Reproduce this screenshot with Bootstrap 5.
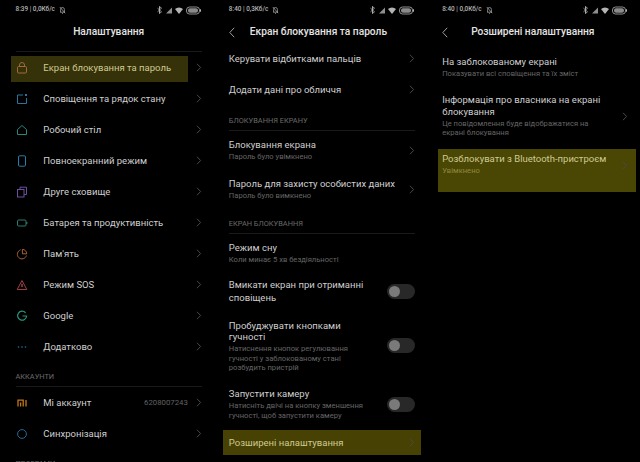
<!DOCTYPE html>
<html>

<head>
  <meta charset="utf-8">
  <meta name="viewport" content="width=device-width, initial-scale=1">
  <link href="https://cdn.jsdelivr.net/npm/bootstrap@5.3.3/dist/css/bootstrap.min.css" rel="stylesheet">
  <title>Налаштування</title>
  <style>
    html, body { height: 462px; overflow: hidden; background: #000; }
    body { font-family: Roboto, "Liberation Sans", sans-serif; color: #cfcfcf; font-size: 9.5px; line-height: 11.5px; }
    .pane { width: 213.33px; height: 462px; overflow: hidden; flex: none; padding: 0 11.5px 0 15.5px; }
    .status { height: 20px; font-size: 6.4px; color: #b4b4b4; font-weight: 500; }
    .status svg { display: block; }
    .head { height: 22px; padding-top: 2px; font-size: 10.2px; font-weight: 500; color: #e4e4e4; }
    .back { width: 21px; flex: none; }
    .set-row { height: 31px; }
    .hl { color: #cfca92; }
    .hl-a { margin: 3px 0 0 -4.8px; height: 26px; width: 177px; padding: 0 0 3px 4.8px; flex: none; background: #353108; }
    .hl-b { margin: 2px -5.5px 0 -6px; height: 25px; padding: 0 5.5px 0 6px; background: #474204; }
    .hl-c { margin: 0 -7.5px 0 -4.5px; height: 43px; padding: 4px 8px 0 4.5px; background: #4a4604; }
    .hl-c .chev { margin-top: 8px; }
    .ico { width: 27.8px; flex: none; }
    .ico svg { display: block; opacity: .88; }
    .chev { width: 6px; height: 9px; flex: none; }
    .sect { font-size: 7.4px; color: #6a6a6a; line-height: 10px; border-bottom: 1px solid #1a1a1a; }
    .sub { font-size: 7.6px; color: #666; line-height: 9.3px; margin-top: 1.5px; }
    .hl .sub { color: #8f8a3c; }
    .val { font-size: 7.8px; color: #626262; }
    .tog { width: 28px; height: 15px; border-radius: 8px; background: #282828; flex: none; padding: 2px; margin-left: 8px; }
    .tog i { display: block; width: 11px; height: 11px; border-radius: 50%; background: #7a7a7a; }
    .txt { min-width: 0; }
    .low-row { padding-top: 2px; }
  </style>
</head>

<body>
  <svg width="0" height="0" class="position-absolute">
    <symbol id="chev" viewBox="0 0 6 9"><path d="M1 .8 4.6 4.5 1 8.2" fill="none" stroke="#4a4a4a" stroke-width="1"/></symbol>
    <symbol id="stat" viewBox="0 0 46 9">
      <path d="M3.5.5v7M1.5 2.2l4 3.6-2 1.7V.5l2 1.7-4 3.6" fill="none" stroke="#b4b4b4" stroke-width=".8"/>
      <path d="M10 7.5 16 1.5v6z" fill="#8f8f8f"/>
      <path d="M19 3a6 6 0 0 1 8 0l-4 5z" fill="#b4b4b4"/>
      <rect x="30.5" y="1" width="13" height="7" rx="3" fill="none" stroke="#b4b4b4" stroke-width=".8"/>
      <rect x="32" y="2.3" width="10" height="4.4" rx="2" fill="#8a8a8a"/>
      <rect x="44" y="3.3" width="1" height="2.4" fill="#b4b4b4"/>
    </symbol>
    <symbol id="bell" viewBox="0 0 7 8"><path d="M1 6.2h5M1.6 6V3.4a1.9 1.9 0 0 1 3.8 0V6M3 7.4h1M.8 1l5.4 6.2" fill="none" stroke="#b4b4b4" stroke-width=".7"/></symbol>
    <symbol id="arrow" viewBox="0 0 6 11"><path d="M5.2 .8.8 5.5l4.4 4.7" fill="none" stroke="#b0b0b0" stroke-width=".9"/></symbol>
  </svg>

  <div class="d-flex">
    <!-- Налаштування -->
    <div class="pane">
      <div class="status d-flex align-items-center justify-content-between">
        <div class="d-flex align-items-center gap-1">8:39 | 0,0Кб/с <svg width="7" height="8"><use href="#bell"/></svg></div>
        <svg width="46" height="9"><use href="#stat"/></svg>
      </div>
      <div class="head d-flex align-items-center justify-content-center">Налаштування</div>
      <div class="sect" style="height:10px"></div>
      <div class="d-flex align-items-center" style="height:31px">
        <div class="hl hl-a d-flex align-items-center">
          <div class="ico"><svg width="12" height="12" viewBox="0 0 12 12"><rect x="1.5" y="4.5" width="9" height="6.5" rx="1" fill="none" stroke="#b2704a"/><path d="M3.5 4.5V3a2.5 2.5 0 0 1 5 0v1.5" fill="none" stroke="#b2704a"/></svg></div>
          <span>Екран блокування та пароль</span>
        </div>
        <svg class="chev ms-auto"><use href="#chev"/></svg>
      </div>
      <div class="set-row d-flex align-items-center">
        <div class="ico"><svg width="12" height="12" viewBox="0 0 12 12"><path d="M7 2H1.5v8.5h9V5" fill="none" stroke="#2e84b5"/><rect x="9" y="1" width="2" height="2" fill="#2e84b5"/></svg></div>
        <span>Сповіщення та рядок стану</span><svg class="chev ms-auto"><use href="#chev"/></svg>
      </div>
      <div class="set-row d-flex align-items-center">
        <div class="ico"><svg width="12" height="12" viewBox="0 0 12 12"><path d="M1.5 5.5 6 1.5l4.5 4v5h-9z" fill="none" stroke="#2c9a93"/></svg></div>
        <span>Робочий стіл</span><svg class="chev ms-auto"><use href="#chev"/></svg>
      </div>
      <div class="set-row d-flex align-items-center">
        <div class="ico"><svg width="12" height="12" viewBox="0 0 12 12"><rect x="2.5" y=".8" width="7" height="10.4" rx="1.2" fill="none" stroke="#2b91c4"/></svg></div>
        <span>Повноекранний режим</span><svg class="chev ms-auto"><use href="#chev"/></svg>
      </div>
      <div class="set-row d-flex align-items-center">
        <div class="ico"><svg width="12" height="12" viewBox="0 0 12 12"><rect x="1.5" y="3.5" width="6.5" height="7.5" fill="none" stroke="#7a5bb5"/><path d="M4 3.5V1.2h6.5v7.3H8" fill="none" stroke="#7a5bb5"/></svg></div>
        <span>Друге сховище</span><svg class="chev ms-auto"><use href="#chev"/></svg>
      </div>
      <div class="set-row d-flex align-items-center">
        <div class="ico"><svg width="12" height="12" viewBox="0 0 12 12"><rect x="1.5" y="3" width="8.5" height="6" rx="1" fill="none" stroke="#2c9080"/><rect x="10.2" y="5" width="1.2" height="2" fill="#2c9080"/></svg></div>
        <span>Батарея та продуктивність</span><svg class="chev ms-auto"><use href="#chev"/></svg>
      </div>
      <div class="set-row d-flex align-items-center">
        <div class="ico"><svg width="12" height="12" viewBox="0 0 12 12"><path d="M4.6 1.9a4.6 4.6 0 1 0 5.8 5.6M6.4 1.4a4.3 4.3 0 0 1 4.3 4.4H6.4z" fill="none" stroke="#c2703c"/></svg></div>
        <span>Пам'ять</span><svg class="chev ms-auto"><use href="#chev"/></svg>
      </div>
      <div class="set-row d-flex align-items-center">
        <div class="ico"><svg width="12" height="12" viewBox="0 0 12 12"><path d="M6 1.5 10.8 10.5H1.2z" fill="none" stroke="#b8474f"/><path d="M6 4.8v3.2" stroke="#b8474f" stroke-width="1.5"/></svg></div>
        <span>Режим SOS</span><svg class="chev ms-auto"><use href="#chev"/></svg>
      </div>
      <div class="set-row d-flex align-items-center">
        <div class="ico"><svg width="12" height="12" viewBox="0 0 12 12"><path d="M9.6 2.8A4.5 4.5 0 1 0 10.6 6H6.5" fill="none" stroke="#2fa98c" stroke-width="1.2"/></svg></div>
        <span>Google</span><svg class="chev ms-auto"><use href="#chev"/></svg>
      </div>
      <div class="set-row d-flex align-items-center">
        <div class="ico"><svg width="12" height="12" viewBox="0 0 12 12"><g fill="#2a86b8"><circle cx="2.5" cy="6" r=".8"/><circle cx="6" cy="6" r=".8"/><circle cx="9.5" cy="6" r=".8"/></g></svg></div>
        <span>Додатково</span><svg class="chev ms-auto"><use href="#chev"/></svg>
      </div>
      <div class="sect d-flex align-items-end pb-1" style="height:25px">АККАУНТИ</div>
      <div class="set-row d-flex align-items-center">
        <div class="ico"><svg width="12" height="12" viewBox="0 0 12 12"><path d="M2 9.5V3.2h5.2v6.3M4.6 5.5v4M10 3v6.5" fill="none" stroke="#e0871f" stroke-width="1.3"/></svg></div>
        <span>Мі аккаунт</span><span class="val ms-auto">6208007243</span><svg class="chev ms-2"><use href="#chev"/></svg>
      </div>
      <div class="set-row d-flex align-items-center">
        <div class="ico"><svg width="12" height="12" viewBox="0 0 12 12"><circle cx="6" cy="6" r="4.4" fill="none" stroke="#2a78a8"/></svg></div>
        <span>Синхронізація</span><svg class="chev ms-auto"><use href="#chev"/></svg>
      </div>
      <div class="sect d-flex align-items-end border-0" style="height:20px">ПРОГРАМИ</div>
    </div>

    <!-- Екран блокування та пароль -->
    <div class="pane">
      <div class="status d-flex align-items-center justify-content-between">
        <div class="d-flex align-items-center gap-1">8:40 | 0,3Кб/с <svg width="7" height="8"><use href="#bell"/></svg></div>
        <svg width="46" height="9"><use href="#stat"/></svg>
      </div>
      <div class="head d-flex align-items-center">
        <div class="back"><svg class="d-block" width="6" height="11"><use href="#arrow"/></svg></div>
        <span>Екран блокування та пароль</span>
      </div>
      <div class="set-row d-flex align-items-center" style="margin-top:1px">
        <span>Керувати відбитками пальців</span><svg class="chev ms-auto"><use href="#chev"/></svg>
      </div>
      <div class="set-row d-flex align-items-center">
        <span>Додати дані про обличчя</span><svg class="chev ms-auto"><use href="#chev"/></svg>
      </div>
      <div class="sect d-flex align-items-end pb-1" style="height:26px">БЛОКУВАННЯ ЕКРАНУ</div>
      <div class="d-flex align-items-center" style="height:39px">
        <div class="txt"><div>Блокування екрана</div><div class="sub">Пароль було увімкнено</div></div>
        <svg class="chev ms-auto"><use href="#chev"/></svg>
      </div>
      <div class="d-flex align-items-center" style="height:39px">
        <div class="txt"><div>Пароль для захисту особистих даних</div><div class="sub">Пароль було вимкнено</div></div>
        <svg class="chev ms-auto"><use href="#chev"/></svg>
      </div>
      <div class="sect d-flex align-items-end pb-1" style="height:25px">ЕКРАН БЛОКУВАННЯ</div>
      <div class="low-row d-flex align-items-center" style="height:37px">
        <div class="txt"><div>Режим сну</div><div class="sub">Коли минає 5 хв бездіяльності</div></div>
      </div>
      <div class="low-row d-flex align-items-center" style="height:39px">
        <div class="txt" style="line-height:12.5px">Вмикати екран при отриманні<br>сповіщень</div>
        <div class="tog ms-auto"><i></i></div>
      </div>
      <div class="low-row d-flex align-items-center" style="height:68px">
        <div class="txt low-row"><div>Пробуджувати кнопками<br>гучності</div><div class="sub">Натиснення кнопок регулювання<br>гучності у заблокованому стані<br>розбудить пристрій</div></div>
        <div class="tog ms-auto"><i></i></div>
      </div>
      <div class="low-row d-flex align-items-center" style="height:50px">
        <div class="txt"><div>Запустити камеру</div><div class="sub">Натисніть двічі на кнопку зменшення<br>гучності, щоб запустити камеру</div></div>
        <div class="tog ms-auto"><i></i></div>
      </div>
      <div class="hl hl-b d-flex align-items-center">
        <span>Розширені налаштування</span><svg class="chev ms-auto"><use href="#chev"/></svg>
      </div>
    </div>

    <!-- Розширені налаштування -->
    <div class="pane">
      <div class="status d-flex align-items-center justify-content-between">
        <div class="d-flex align-items-center gap-1">8:40 | 0,0Кб/с <svg width="7" height="8"><use href="#bell"/></svg></div>
        <svg width="46" height="9"><use href="#stat"/></svg>
      </div>
      <div class="head d-flex align-items-center">
        <div class="back"><svg class="d-block" width="6" height="11"><use href="#arrow"/></svg></div>
        <span class="ms-2">Розширені налаштування</span>
      </div>
      <div class="d-flex align-items-center" style="height:39px;margin-top:5.5px">
        <div class="txt"><div>На заблокованому екрані</div><div class="sub">Показувати всі сповіщення та їх зміст</div></div>
      </div>
      <div class="d-flex align-items-center" style="height:59px;margin-bottom:3px">
        <div class="txt"><div>Інформація про власника на екрані<br>блокування</div><div class="sub">Це повідомлення буде відображатися на<br>екрані блокування</div></div>
        <svg class="chev ms-auto"><use href="#chev"/></svg>
      </div>
      <div class="hl hl-c d-flex">
        <div class="txt"><div>Розблокувати з Bluetooth-пристроєм</div><div class="sub">Увімкнено</div></div>
        <svg class="chev ms-auto"><use href="#chev"/></svg>
      </div>
    </div>
  </div>

  <script src="https://cdn.jsdelivr.net/npm/bootstrap@5.3.3/dist/js/bootstrap.bundle.min.js"></script>
</body>

</html>
